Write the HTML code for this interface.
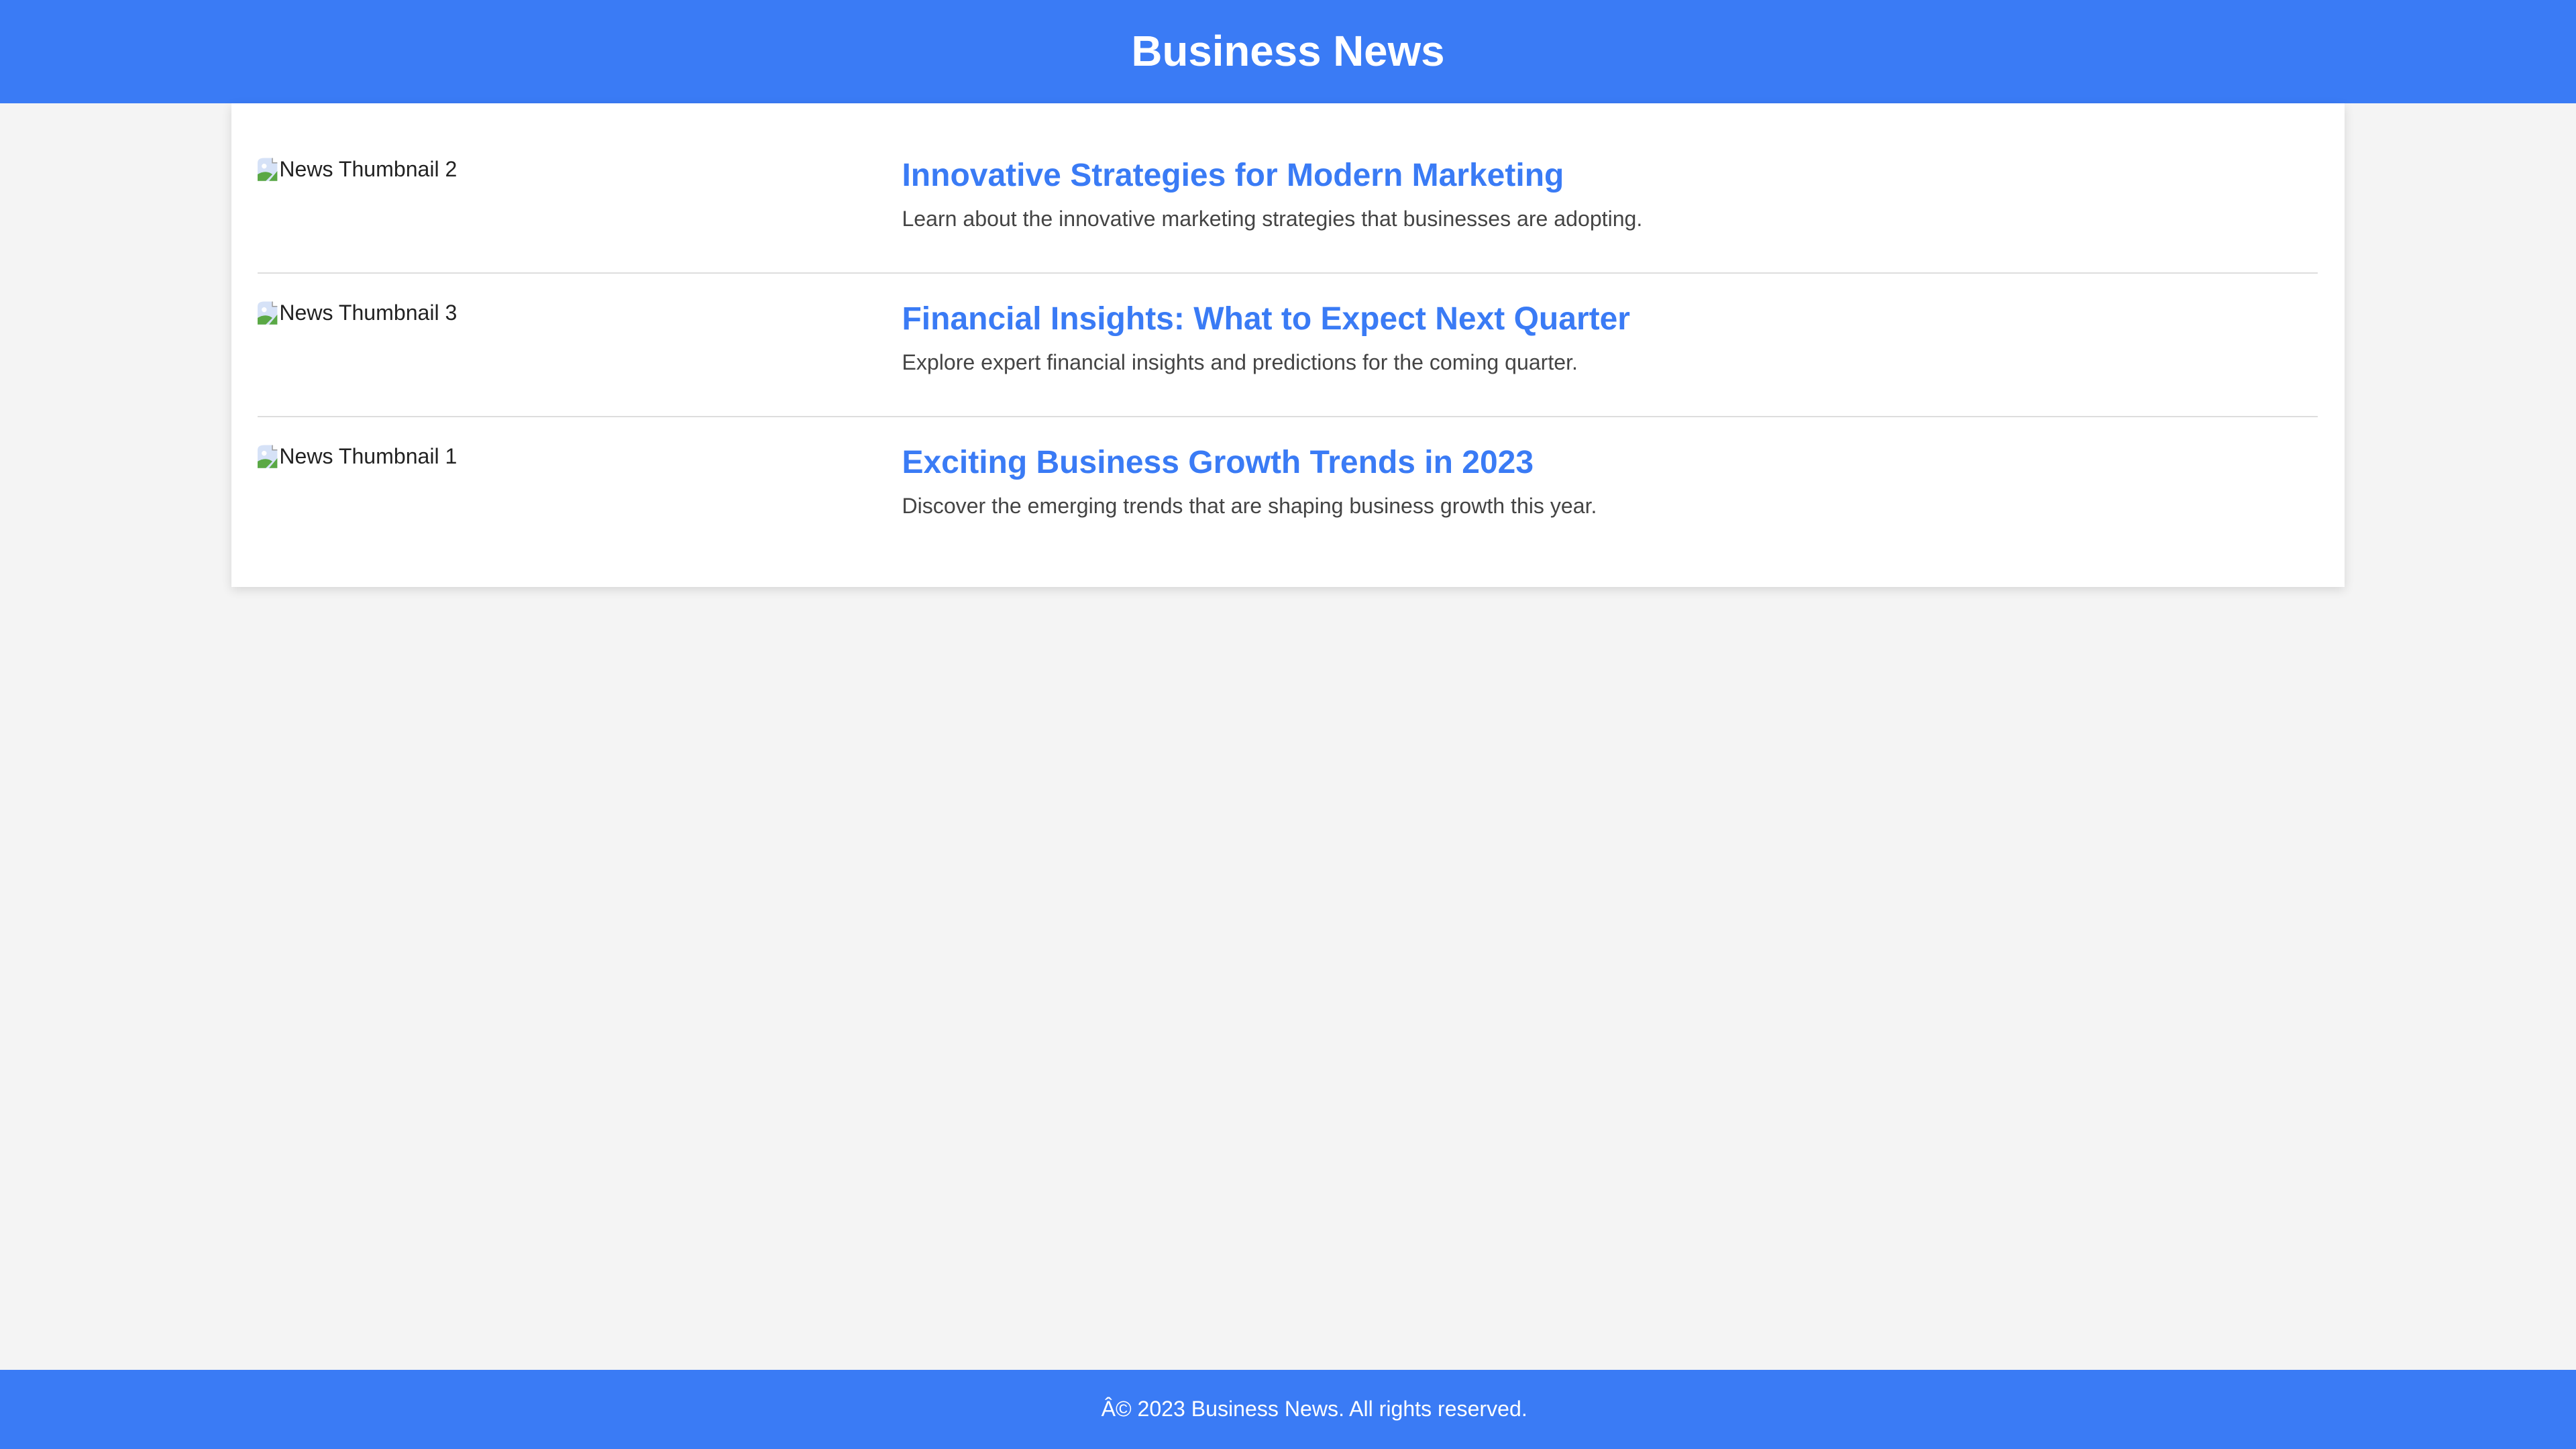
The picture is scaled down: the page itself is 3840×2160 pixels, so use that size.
<!DOCTYPE html>
<html><head><meta charset="utf-8"><style>
html,body{margin:0;padding:0;}
body{width:1568px;height:882px;zoom:2.44898;background:#f4f4f4;font-family:"Liberation Sans",Arial,sans-serif;position:relative;overflow:hidden;}
header{position:absolute;left:0;top:0;width:1568px;height:63px;background:#3a7bf5;color:#fff;text-align:center;}
header h1{margin:0;font-size:26px;line-height:63px;font-weight:bold;}
.wrap{position:absolute;left:141px;top:63px;width:1254px;padding:16px;background:#fff;box-shadow:0 2px 6px rgba(0,0,0,0.12);}
.item{display:flex;height:87.5px;box-sizing:border-box;padding-top:17px;border-bottom:1px solid #ddd;}
.item:last-child{border-bottom:none;}
.thumb{width:392px;font-size:13.1px;color:#222;line-height:16px;display:flex;align-items:flex-start;margin-top:-1px;}
.thumb svg{width:14px;height:16px;flex:none;margin-right:-1px;}
.txt h2{margin:0;font-size:19.6px;line-height:24px;color:#3a7bf5;font-weight:bold;margin-top:-1px;}
.txt p{margin:5px 0 0;font-size:13.1px;line-height:18px;color:#444;}
footer{position:absolute;left:0;top:834px;width:1536px;padding-left:32px;height:48px;background:#3a7bf5;color:#fff;text-align:center;font-size:13.1px;line-height:48px;}
</style></head><body>
<header><h1>Business News</h1></header>
<div class="wrap">
 <div class="item"><div class="thumb"><svg viewBox="0 0 14 16"><path d="M0 4 Q0 1 4 1 L9 1 L12 4 L12 15 L0 15 Z" fill="#d6e2f7"/><path d="M0 15 L0 11 Q5 8 9 11 L5 15 Z" fill="#5aa845"/><path d="M12 9 L7 15 L12 15 Z" fill="#5aa845"/><path d="M9 1 L9 4 L12 4" fill="#fff" stroke="#999" stroke-width=".6"/><circle cx="4" cy="6" r="1.5" fill="#fff"/></svg>News Thumbnail 2</div><div class="txt"><h2>Innovative Strategies for Modern Marketing</h2><p>Learn about the innovative marketing strategies that businesses are adopting.</p></div></div>
 <div class="item"><div class="thumb"><svg viewBox="0 0 14 16"><path d="M0 4 Q0 1 4 1 L9 1 L12 4 L12 15 L0 15 Z" fill="#d6e2f7"/><path d="M0 15 L0 11 Q5 8 9 11 L5 15 Z" fill="#5aa845"/><path d="M12 9 L7 15 L12 15 Z" fill="#5aa845"/><path d="M9 1 L9 4 L12 4" fill="#fff" stroke="#999" stroke-width=".6"/><circle cx="4" cy="6" r="1.5" fill="#fff"/></svg>News Thumbnail 3</div><div class="txt"><h2>Financial Insights: What to Expect Next Quarter</h2><p>Explore expert financial insights and predictions for the coming quarter.</p></div></div>
 <div class="item"><div class="thumb"><svg viewBox="0 0 14 16"><path d="M0 4 Q0 1 4 1 L9 1 L12 4 L12 15 L0 15 Z" fill="#d6e2f7"/><path d="M0 15 L0 11 Q5 8 9 11 L5 15 Z" fill="#5aa845"/><path d="M12 9 L7 15 L12 15 Z" fill="#5aa845"/><path d="M9 1 L9 4 L12 4" fill="#fff" stroke="#999" stroke-width=".6"/><circle cx="4" cy="6" r="1.5" fill="#fff"/></svg>News Thumbnail 1</div><div class="txt"><h2>Exciting Business Growth Trends in 2023</h2><p>Discover the emerging trends that are shaping business growth this year.</p></div></div>
</div>
<footer>Â© 2023 Business News. All rights reserved.</footer>
</body></html>
